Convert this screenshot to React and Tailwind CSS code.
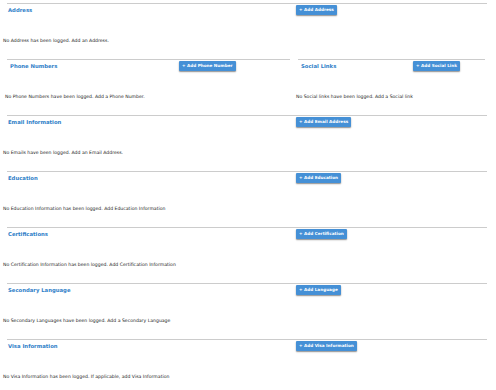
const font = { fontFamily: '"DejaVu Sans", Verdana, sans-serif' }

function AddButton({ label }) {
  return (
    <button className="h-[10px] px-[3px] rounded-[1px] bg-[#4590d6] text-white text-[4.2px] font-bold leading-none shadow-[0_1px_1.5px_rgba(0,0,0,0.45)] whitespace-nowrap">
      + {label}
    </button>
  )
}

function Section({ title, button, empty, titleW, half }) {
  return (
    <div className="h-[56px] border-t border-[#cccccc]">
      <div className="mt-[1px] h-[10px] flex items-center">
        <div className={`${titleW} ${half ? 'pl-[3px]' : 'pl-[1px]'} pt-[1px] shrink-0 text-[5.3px] font-bold leading-none text-[#2f80c8]`}>
          {title}
        </div>
        <AddButton label={button} />
      </div>
      <p className={`mt-[22px] ${half ? '-ml-[2px]' : '-ml-[4px]'} text-[4.6px] leading-[7px] text-[#222] whitespace-nowrap`}>
        {empty}
      </p>
    </div>
  )
}

const rows = [
  { title: 'Email Information', button: 'Add Email Address', empty: 'No Emails have been logged. Add an Email Address.' },
  { title: 'Education', button: 'Add Education', empty: 'No Education Information has been logged. Add Education Information' },
  { title: 'Certifications', button: 'Add Certification', empty: 'No Certification Information has been logged. Add Certification Information' },
  { title: 'Secondary Language', button: 'Add Language', empty: 'No Secondary Languages have been logged. Add a Secondary Language' },
  { title: 'Visa Information', button: 'Add Visa Information', empty: 'No Visa Information has been logged. If applicable, add Visa Information' },
]

export default function App() {
  return (
    <div className="w-[496px] h-[390px] bg-white overflow-hidden pt-[3px]" style={font}>
      <div className="ml-[7px] w-[480px]">
        <Section title="Address" button="Add Address" empty="No Address has been logged. Add an Address." titleW="w-[289px]" />
        <div className="flex gap-[8px]">
          <div className="w-[283px]">
            <Section half title="Phone Numbers" button="Add Phone Number" empty="No Phone Numbers have been logged. Add a Phone Number." titleW="w-[172px]" />
          </div>
          <div className="w-[187px]">
            <Section half title="Social Links" button="Add Social Link" empty="No Social links have been logged. Add a Social link" titleW="w-[115px]" />
          </div>
        </div>
        {rows.map(r => (
          <Section key={r.title} {...r} titleW="w-[289px]" />
        ))}
      </div>
    </div>
  )
}
